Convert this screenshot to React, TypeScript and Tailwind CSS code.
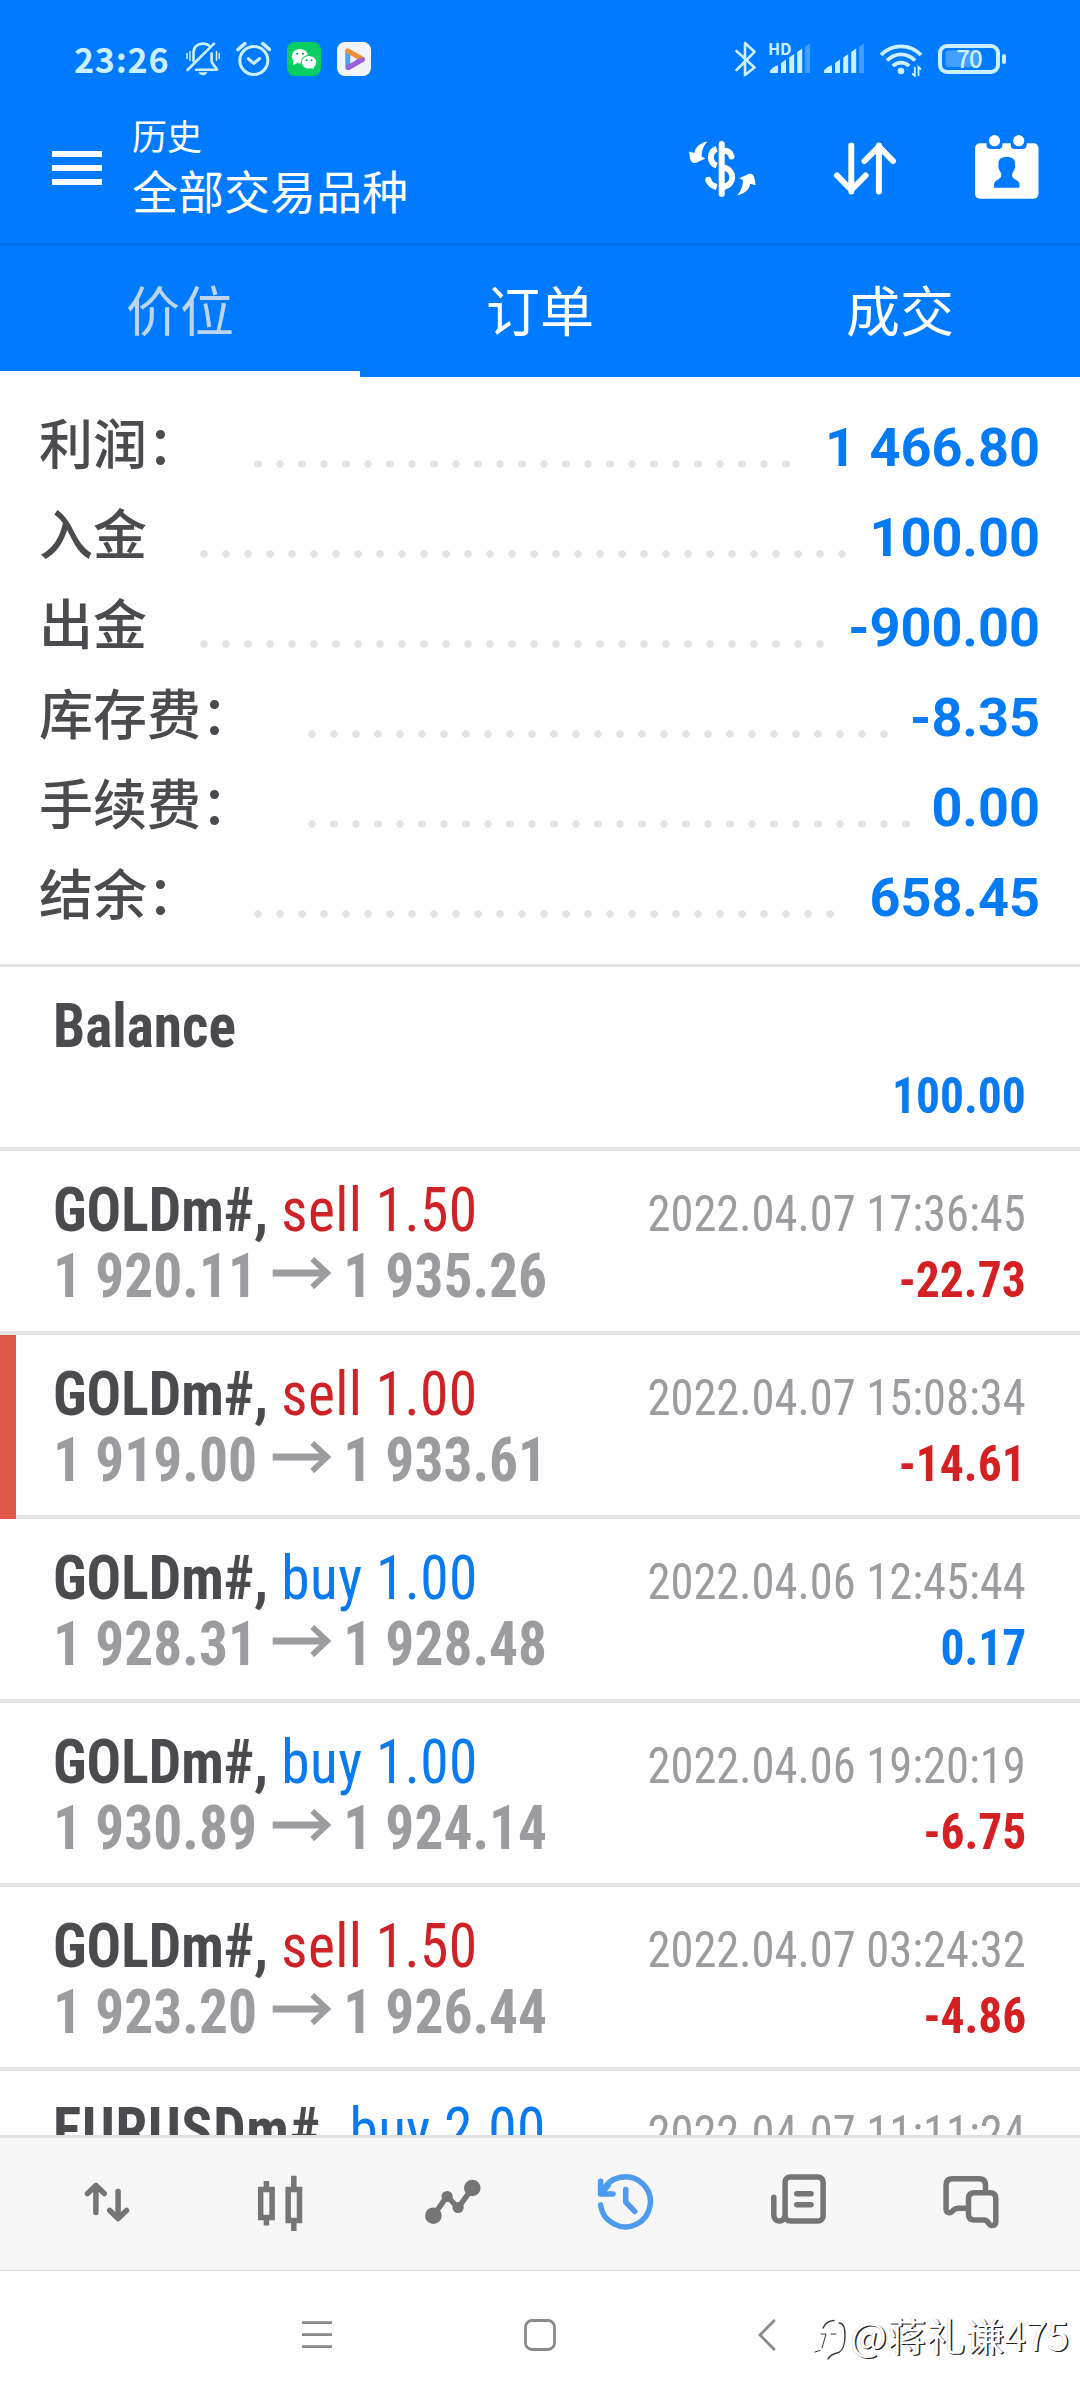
import React from "react";
import clsx from "clsx";

interface SummaryRow {
  label: string;
  value: string;
  dots: number;
}

interface Deal {
  symbol: string;
  side: "buy" | "sell";
  volume: string;
  open: string;
  close: string;
  time: string;
  profit: string;
  marked?: boolean;
}

const tabs = ["价位", "订单", "成交"];

const summary: SummaryRow[] = [
  { label: "利润：", value: "1 466.80", dots: 25 },
  { label: "入金", value: "100.00", dots: 30 },
  { label: "出金", value: "-900.00", dots: 29 },
  { label: "库存费：", value: "-8.35", dots: 27 },
  { label: "手续费：", value: "0.00", dots: 28 },
  { label: "结余：", value: "658.45", dots: 27 },
];

const deals: Deal[] = [
  { symbol: "GOLDm#", side: "sell", volume: "1.50", open: "1 920.11", close: "1 935.26", time: "2022.04.07 17:36:45", profit: "-22.73" },
  { symbol: "GOLDm#", side: "sell", volume: "1.00", open: "1 919.00", close: "1 933.61", time: "2022.04.07 15:08:34", profit: "-14.61", marked: true },
  { symbol: "GOLDm#", side: "buy", volume: "1.00", open: "1 928.31", close: "1 928.48", time: "2022.04.06 12:45:44", profit: "0.17" },
  { symbol: "GOLDm#", side: "buy", volume: "1.00", open: "1 930.89", close: "1 924.14", time: "2022.04.06 19:20:19", profit: "-6.75" },
  { symbol: "GOLDm#", side: "sell", volume: "1.50", open: "1 923.20", close: "1 926.44", time: "2022.04.07 03:24:32", profit: "-4.86" },
];

const BellOffIcon = () => (
  <svg width="34" height="36" viewBox="0 0 34 36" fill="none" stroke="currentColor" strokeWidth="2.6" strokeLinecap="round" className="ml-[15px]">
    <path d="M7.5 20V11.5C7.5 6 11.5 2.6 17 2.6c2.4 0 4.4.7 6 2" />
    <path d="M25.6 12.5v7.2c0 3.8 5 6.2 5.4 9H10" strokeLinejoin="round" />
    <path d="M1.5 29 28 2.6" />
    <path d="M12.5 31.2h9c-.8 2-2.5 3-4.5 3s-3.7-1-4.5-3z" fill="currentColor" stroke="none" />
    <path d="M1 12.5v5M3.9 10.5v9M30.5 10.5v9M33.2 12.5v5" strokeWidth="1.5" />
  </svg>
);

const AlarmIcon = () => (
  <svg width="35" height="36" viewBox="0 0 35 36" fill="none" stroke="currentColor" strokeWidth="3" strokeLinecap="round" strokeLinejoin="round" className="ml-4">
    <circle cx="17.8" cy="19.5" r="14" />
    <path d="m12.3 17.7 5.3 4.8 6-5" />
    <path d="m2 8.5 6.8-5.8M26.8 2.7l6.7 5.800" strokeWidth="3.6" />
  </svg>
);

const WeChatIcon = () => (
  <svg width="34" height="36" viewBox="0 0 34 36" className="ml-4">
    <rect y="1" width="34" height="34" rx="8" fill="#08ce63" />
    <path d="M6.5 19.5 6 24l4.5-2z" fill="#fff" />
    <ellipse cx="13" cy="15.2" rx="8.2" ry="7.2" fill="#fff" />
    <ellipse cx="22" cy="21.2" rx="8.3" ry="7.3" fill="#08ce63" />
    <ellipse cx="22" cy="21.2" rx="7.3" ry="6.3" fill="#fff" />
    <path d="m23 26.5 4 1.6-.5-3.5z" fill="#fff" />
    <g fill="#08a850">
      <circle cx="10.3" cy="12.8" r="1.1" />
      <circle cx="16" cy="12.8" r="1.1" />
      <circle cx="19.6" cy="19.3" r="1" />
      <circle cx="24.5" cy="19.3" r="1" />
    </g>
  </svg>
);

const VideoIcon = () => (
  <svg width="34" height="36" viewBox="0 0 34 36" fill="none" strokeWidth="5" strokeLinejoin="round" strokeLinecap="round" className="ml-4">
    <rect y="1" width="34" height="34" rx="8" fill="#f3f4f8" />
    <path d="M10.8 10.5v16" stroke="#4ba3f5" />
    <path d="M25.5 18.5 11.5 26.5" stroke="#9b5fd8" />
    <path d="m10.8 9.8 13.5 7.7" stroke="#f0903c" />
    <path d="m20 20.5 6-2.2" stroke="#9b5fd8" strokeWidth="3.5" />
  </svg>
);

const BluetoothIcon = () => (
  <svg width="21" height="36" viewBox="0 0 21 36" fill="none" stroke="currentColor" strokeWidth="2.6" strokeLinejoin="round" strokeLinecap="round">
    <path d="m1.5 10 18 16.500-9.500 7.500V2l9.500 8.800L1.500 29" />
  </svg>
);

const Bars = () => (
  <>
    <path d="M0 32v-2.500c1.500-2 5-4.500 8-5.200V32zM11 32V22l5-3.500V32zM19.200 32V16.500l5-3.500V32zM27.200 32V11l5-3.500V32z" fill="currentColor" />
    <path d="M35 32V5.500L40 2.500V32z" fill="#429fff" />
  </>
);

const WifiIcon = () => (
  <svg width="42" height="36" viewBox="0 0 42 36" fill="none" stroke="currentColor" strokeWidth="3.8" className="ml-4">
    <path d="M1 14C12 2.500 30 2.500 41 14M7 19.500c8-8.300 20-8.300 28 0M12.800 25c4.800-4.600 11.600-4.600 16.400 0" />
    <circle cx="21" cy="30" r="3.3" fill="currentColor" stroke="none" />
    <path d="M34.800 26v9l-2.500-2.500M38.500 35v-9l2.500 2.500" strokeWidth="1.8" />
  </svg>
);

const BatteryIcon = () => (
  <svg width="68" height="36" viewBox="0 0 68 36" className="ml-4">
    <rect x="7.5" y="9.5" width="35" height="16.5" rx="3" fill="#429fff" />
    <rect x="2" y="5" width="58" height="26" rx="7" fill="none" stroke="currentColor" strokeWidth="4" />
    <rect x="64" y="13" width="4" height="10" rx="2" fill="currentColor" />
    <text x="31" y="26.5" textAnchor="middle" fontSize="24" fontWeight="500" fill="currentColor" letterSpacing="-1" className="font-['Noto_Sans_CJK_SC',sans-serif]">
      70
    </text>
  </svg>
);

const StatusBar = () => (
  <div className="flex h-[93px] items-start justify-between pt-[41px] pr-[74px] pl-[74px] text-[#cdf0ff]">
    <div className="flex items-center">
      <span className="w-[97px] text-[34px] leading-[36px] font-bold tracking-[0.8px] font-['Noto_Sans_CJK_SC',sans-serif]">23:26</span>
      <BellOffIcon />
      <AlarmIcon />
      <WeChatIcon />
      <VideoIcon />
    </div>
    <div className="flex items-center">
      <BluetoothIcon />
      <svg width="41" height="36" viewBox="-1 0 41 36" className="ml-[13px] overflow-visible">
        <text x="-2" y="14" fontSize="16" fontWeight="700" fill="currentColor" className="font-['Noto_Sans_CJK_SC',sans-serif]">
          HD
        </text>
        <Bars />
      </svg>
      <svg width="40" height="36" viewBox="0 0 40 36" className="ml-[14px]">
        <Bars />
      </svg>
      <WifiIcon />
      <BatteryIcon />
    </div>
  </div>
);

const CurrencyIcon = () => (
  <svg width="74" height="64" viewBox="0 0 74 64" fill="none" stroke="currentColor" strokeWidth="6">
    <path d="M36.700 8v50" strokeLinecap="round" />
    <path d="M31.700 12.800C24 15.500 24 27 31.700 29.500" />
    <path d="M38 14.500c5 0 7.500 2 8.500 6" strokeLinecap="round" />
    <path d="M38 31.500c12 1.500 12.500 17.500 0 19.500" />
    <path d="M31.700 51C27.500 50 24.500 47.500 23 43.500" />
    <circle cx="23.300" cy="43.800" r="3" fill="currentColor" stroke="none" />
    <g fill="currentColor" stroke="none">
      <path id="swap" d="M22.300 5.500C15.500 6.500 9.800 11.500 9.500 17L4 15.500l1 6.500c.8 4 2.500 5.500 5.500 5l10-4.500-3.800-1.800c-.4-5.200 1.600-10.700 5.600-15.200z" />
      <use href="#swap" transform="rotate(180 37.300 32.400)" />
    </g>
  </svg>
);

const SortIcon = () => (
  <svg width="64" height="58" viewBox="0 0 64 58" fill="none" stroke="currentColor" strokeWidth="6" strokeLinecap="round" strokeLinejoin="round" className="ml-[74px]">
    <path d="M18.300 6.500v46M4 36.500l14.300 14.500L32.600 36.500" />
    <path d="M45.900 52.500v-46M31.500 22 45.900 7.500 60 22" />
  </svg>
);

const CalendarIcon = () => (
  <svg width="64" height="68" viewBox="0 0 64 68" className="ml-[78px]">
    <rect y="9.300" width="63.500" height="55.500" rx="5" fill="#fff" />
    <path d="M11.500 9v1.500q0 4.500 4.500 4.500h7q4.500 0 4.500-4.500V9zM35.700 9v1.500q0 4.500 4.500 4.500h7q4.500 0 4.500-4.500V9z" fill="#007aff" />
    <circle cx="19.500" cy="6.700" r="5.600" fill="#fff" />
    <circle cx="43.700" cy="6.700" r="5.600" fill="#fff" />
    <path
      d="M31.700 23c6 0 8.800 2.500 8.300 7.500.5 3-.5 5.500-2 7.500-.8 1.200-1 2.500-.8 4 1 4 6.800 3.500 7.300 8.500v3.300H19v-3.300c.5-5 6.300-4.500 7.300-8.500.2-1.500 0-2.800-.8-4-1.500-2-2.500-4.500-2-7.500-.5-5 2.200-7.500 8.200-7.500z"
      fill="#007aff"
    />
  </svg>
);

const Header = () => (
  <div className="flex h-[150px] items-center pr-[41px] pl-[52px] text-white">
    <div className="flex flex-col gap-2">
      <span className="h-[6px] w-[50px] bg-current" />
      <span className="h-[6px] w-[50px] bg-current" />
      <span className="h-[6px] w-[50px] bg-current" />
    </div>
    <div className="ml-[30px] flex flex-1 flex-col pb-[12px] leading-[55px] font-['Noto_Sans_CJK_SC',sans-serif]">
      <span className="text-[35px]">历史</span>
      <span className="text-[46px]">全部交易品种</span>
    </div>
    <CurrencyIcon />
    <SortIcon />
    <CalendarIcon />
  </div>
);

const Tabs = () => (
  <div className="flex h-[134px] border-t-[3px] border-[#0070ea] text-[54px] font-['Noto_Sans_CJK_SC',sans-serif]">
    {tabs.map((tab, i) => (
      <div
        key={tab}
        className={clsx(
          "flex flex-1 items-center justify-center border-b-[6px] leading-[80px]",
          i === 0 ? "border-white text-[#bcd5ec]" : "border-[#007aff] text-white",
        )}
      >
        {tab}
      </div>
    ))}
  </div>
);

const Summary = () => (
  <div className="h-[590px] border-b-[3px] border-[#e3e3e3] px-10 pt-[26px] text-[54px] leading-[90px] font-medium font-['Roboto','Noto_Sans_CJK_SC',sans-serif]">
    {summary.map((row) => (
      <div key={row.label} className="flex h-[90px] items-start">
        <span className="-mt-px -ml-px text-[#4a4a4f]">{row.label}</span>
        <span
          className="mt-[57px] ml-[46px] h-2 bg-[radial-gradient(circle,#e2e2e2_3.4px,transparent_4px)] bg-[length:22px_8px]"
          style={{ width: row.dots * 22 }}
        />
        <span className="ml-auto font-bold text-[#057af5]">{row.value}</span>
      </div>
    ))}
  </div>
);

const PriceArrow = () => (
  <svg width="64" height="34" viewBox="0 0 64 34" fill="none" stroke="currentColor" strokeWidth="7" className="mr-[12px] ml-[17px] inline-block align-[7px]">
    <path d="M0 17h59" />
    <path d="m43 3 16 14-16 14" strokeWidth="6" />
  </svg>
);

const DealTitle = ({ symbol, side, volume }: Pick<Deal, "symbol" | "side" | "volume">) => (
  <div className="text-[#4a4a4f]">
    {symbol},{" "}
    <span
      className={clsx(
        "[font-weight:450] tracking-[0.4px]",
        side === "buy" ? "text-[#0a7af0]" : "text-[#cf2226]",
      )}
    >
      {side} {volume}
    </span>
  </div>
);

const DealRow = ({ deal }: { deal: Deal }) => (
  <div className="relative flex h-[184px] justify-between border-b-4 border-[#e3e3e3] pr-[54px] pl-[53px] whitespace-nowrap">
    {deal.marked && <span className="absolute top-0 left-0 h-[184px] w-4 bg-[#df5748]" />}
    <div className="origin-left scale-x-[0.926] pt-[26px] text-[62px] leading-[66px] font-bold">
      <DealTitle {...deal} />
      <div className="h-[66px] text-[#9b9ba0]">
        {deal.open}
        <PriceArrow />
        {deal.close}
      </div>
    </div>
    <div className="flex flex-col items-end pt-[30px] text-[50px] leading-[66px]">
      <span className="origin-right scale-x-[0.93] text-[#9b9ba0]">{deal.time}</span>
      <span className={clsx("origin-right scale-x-[0.95] font-bold", deal.profit.startsWith("-") ? "text-[#d42023]" : "text-[#0a7af0]")}>
        {deal.profit}
      </span>
    </div>
  </div>
);

const History = () => (
  <div className="h-[1168px] overflow-hidden font-['Roboto_Condensed',sans-serif]">
    <div className="flex h-[184px] justify-between border-b-4 border-[#e3e3e3] pr-[54px] pl-[53px] font-bold">
      <span className="origin-left scale-x-[0.926] pt-[26px] text-[62px] leading-[66px] text-[#4a4a4f]">Balance</span>
      <span className="origin-right scale-x-[0.95] pt-[96px] text-[50px] leading-[66px] text-[#0a7af0]">100.00</span>
    </div>
    {deals.map((deal) => (
      <DealRow key={deal.time} deal={deal} />
    ))}
    {/* last row is scrolled half under the bottom bar */}
    <div className="flex justify-between pr-[54px] pl-[53px] whitespace-nowrap">
      <div className="origin-left scale-x-[0.926] pt-[26px] text-[62px] leading-[66px] font-bold tracking-[0.8px]">
        <DealTitle symbol="EURUSDm#" side="buy" volume="2.00" />
      </div>
      <span className="origin-right scale-x-[0.93] pt-[30px] text-[50px] leading-[66px] text-[#9b9ba0]">2022.04.07 11:11:24</span>
    </div>
  </div>
);

const NavIcon = ({ active, children }: { active?: boolean; children: React.ReactNode }) => (
  <div className={clsx("flex flex-1 items-center justify-center", active ? "text-[#4c9bee]" : "text-[#757575]")}>
    <svg width="60" height="60" viewBox="0 0 60 60" fill="none" stroke="currentColor" strokeWidth="5.5" strokeLinecap="round" strokeLinejoin="round">
      {children}
    </svg>
  </div>
);

const BottomNav = () => (
  <div className="flex h-[136px] border-t-[3px] border-b border-t-[#dfdfdf] border-b-[#e0e0e0] bg-[#f7f7f7] pr-[23px] pb-1 pl-[21px]">
    <NavIcon>
      <path d="M18.900 40.500V13.500M10.500 21.500l8.400-8 8.400 8" />
      <path d="M41.100 19.500v27M32.700 38.500l8.400 8 8.400-8" />
    </NavIcon>
    <NavIcon>
      <g strokeLinecap="butt" strokeLinejoin="miter">
        <path d="M10.700 17.400h11.400v28.200H10.700zM16.400 9v6M16.400 48v5.500" />
        <path d="M38.200 17.400h11.300v31H38.200zM43.800 3.700V15M43.800 50v9" />
      </g>
    </NavIcon>
    <NavIcon>
      <path d="m10.400 43.700 13.700-19.700 11 12 14.200-20" />
      <g fill="currentColor" stroke="none">
        <circle cx="10.400" cy="43.700" r="8.300" />
        <circle cx="24.100" cy="24.500" r="5.600" />
        <circle cx="35.100" cy="35.500" r="5.600" />
        <circle cx="49.300" cy="16" r="8.300" />
      </g>
    </NavIcon>
    <NavIcon active>
      <path d="M5.600 33a25 25 0 1 0 2-13.500" />
      <path d="M5.600 9.300V22H18M5.600 22 13 14" />
      <path d="M30.700 17.500v12.500l9 9.300" />
    </NavIcon>
    <NavIcon>
      <rect x="17.100" y="5" width="38" height="44" rx="5" />
      <path d="M5.800 25.300v17.500c0 8 9.500 8 11.300 1.500" />
      <path d="M28.800 21.700H43M28.800 32.700H43" />
    </NavIcon>
    <NavIcon>
      <path d="M44.500 19.500V13q0-6.300-6.500-6.300H11.500Q5.100 6.700 5.100 13v24c0 4.500 4.500 4.500 6 2.500 2-2.500 3.500-3.300 6.500-3.300H26" />
      <path d="M33.500 20.700h15.500q5.800 0 5.800 5.800V50c0 4-5.500 4.500-7 1.500C46.500 49 45.500 48 42.500 48h-9q-6 0-6-6V26.500q0-5.800 6-5.800z" />
    </NavIcon>
  </div>
);

const Watermark = () => (
  <div className="absolute top-[2304px] left-[812px] flex items-center text-white">
    <svg width="38" height="60" viewBox="0 0 38 60" fill="none" strokeLinecap="round" className="overflow-visible">
      <g stroke="#3a3a3a" strokeWidth="1.4">
        <path d="M11 24q3-7 11-7.500" />
        <path d="M27 19c4 0 6 5 6 12 0 10-3 17-8 18-4 1-7 2-9 6" />
        <path d="M9 30h5l-4 14M3 48l5-1.500M19 30h5" strokeWidth="1" />
      </g>
    </svg>
    <span className="text-[39px] leading-[60px] whitespace-nowrap [text-shadow:1.5px_1px_0.5px_#222,-0.5px_-0.5px_0.5px_#ccc] font-['Noto_Sans_CJK_SC',sans-serif]">
      @蒋礼谦475
    </span>
  </div>
);

const SystemNav = () => (
  <div className="flex h-[127px] items-center pl-[302px]">
    <svg width="30" height="32" viewBox="0 0 30 32" stroke="#8a8a8a" strokeWidth="2.8">
      <path d="M0 3.700h30M0 15.700h30M0 27.700h30" />
    </svg>
    <svg width="32" height="32" viewBox="0 0 32 32" fill="none" stroke="#8a8a8a" strokeWidth="2.8" className="ml-[192px]">
      <rect x="1.500" y="1.500" width="29" height="29" rx="6.500" />
    </svg>
    <svg width="18" height="32" viewBox="0 0 18 32" fill="none" stroke="#8a8a8a" strokeWidth="2.8" className="ml-[202px]">
      <path d="M16.800 1 2 16l14.800 15" />
    </svg>
  </div>
);

const App = () => (
  <div lang="zh-CN" className="relative h-[2400px] w-[1080px] overflow-hidden bg-[#fefefe]">
    <div className="bg-[#007aff]">
      <StatusBar />
      <Header />
      <Tabs />
    </div>
    <Summary />
    <History />
    <BottomNav />
    <SystemNav />
    <Watermark />
  </div>
);

export default App;
